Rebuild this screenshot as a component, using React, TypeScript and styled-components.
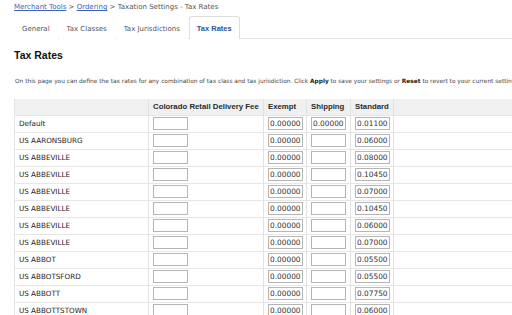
import React from "react";
import styled, { createGlobalStyle } from "styled-components";

const GlobalStyle = createGlobalStyle`
  html, body {
    margin: 0;
    padding: 0;
    background: #fff;
    overflow: hidden;
  }
  body {
    font-family: "DejaVu Sans", "Liberation Sans", sans-serif;
    color: #222;
  }
`;

const Page = styled.div`
  width: 700px;
  padding: 0 0 0 14px;
`;

const Crumbs = styled.div`
  height: 16px;
  padding-top: 2px;
  box-sizing: border-box;
  font-size: 7px;
  line-height: 11px;
  color: #555;
  white-space: nowrap;
  a {
    color: #3a63b8;
    text-decoration: underline;
  }
`;

const TabBar = styled.div`
  display: flex;
  gap: 1px;
  height: 22px;
  border-bottom: 1px solid #e2e2e2;
`;

const Tab = styled.div<{ $active?: boolean }>`
  display: flex;
  align-items: center;
  padding: 1px 7px 0;
  height: 23px;
  font-size: ${(p) => (p.$active ? "7.5px" : "7px")};
  font-family: ${(p) => (p.$active ? '"Liberation Sans", Arial, sans-serif' : "inherit")};
  font-weight: ${(p) => (p.$active ? 700 : 400)};
  color: ${(p) => (p.$active ? "#2b5797" : "#555")};
  background: #fff;
  border: 1px solid ${(p) => (p.$active ? "#dedede" : "transparent")};
  border-bottom: none;
  border-radius: 3px 3px 0 0;
  box-sizing: border-box;
  white-space: nowrap;
`;

const Heading = styled.h1`
  margin: 10px 0 0 0;
  height: 12px;
  font-family: "Liberation Sans", Arial, sans-serif;
  font-size: 10.5px;
  line-height: 12px;
  font-weight: 700;
  color: #111;
`;

const Intro = styled.p`
  margin: 16px 0 0 1px;
  height: 8px;
  font-size: 5.85px;
  line-height: 8px;
  color: #444;
  white-space: nowrap;
  b {
    font-weight: 700;
    color: #222;
  }
`;

const Table = styled.table`
  margin-top: 14px;
  width: 640px;
  border-collapse: collapse;
  table-layout: fixed;
  border-left: 1px solid #e4e4e4;
`;

const Th = styled.th<{ $w?: number }>`
  ${(p) => (p.$w ? `width: ${p.$w}px;` : "")}
  height: 16px;
  padding: 0 0 0 4px;
  text-align: left;
  background: #f0f0f0;
  font-family: "Liberation Sans", Arial, sans-serif;
  font-size: 7.8px;
  font-weight: 700;
  color: #2a2a2a;
  border-right: 1px solid #e2e2e2;
  box-sizing: border-box;
  white-space: nowrap;
  overflow: hidden;
`;

const Td = styled.td<{ $empty?: boolean }>`
  height: 17px;
  padding: 0 0 1px 4px;
  font-size: 7.2px;
  color: #222;
  border-top: 1px solid #e6e6e6;
  border-right: ${(p) => (p.$empty ? "none" : "1px solid #e2e2e2")};
  box-sizing: border-box;
  white-space: nowrap;
`;

const RateInput = styled.input`
  display: block;
  width: 35px;
  height: 13px;
  margin: 0;
  padding: 0 1px;
  box-sizing: border-box;
  border: 1px solid #b5b5b5;
  border-radius: 0;
  font-family: "DejaVu Sans", sans-serif;
  font-size: 7.4px;
  color: #333;
  background: #fff;
  outline: none;
`;

type Row = { name: string; exempt: string; shipping: string; standard: string };

const rows: Row[] = [
  { name: "Default", exempt: "0.00000", shipping: "0.00000", standard: "0.01100" },
  { name: "US AARONSBURG", exempt: "0.00000", shipping: "", standard: "0.06000" },
  { name: "US ABBEVILLE", exempt: "0.00000", shipping: "", standard: "0.08000" },
  { name: "US ABBEVILLE", exempt: "0.00000", shipping: "", standard: "0.10450" },
  { name: "US ABBEVILLE", exempt: "0.00000", shipping: "", standard: "0.07000" },
  { name: "US ABBEVILLE", exempt: "0.00000", shipping: "", standard: "0.10450" },
  { name: "US ABBEVILLE", exempt: "0.00000", shipping: "", standard: "0.06000" },
  { name: "US ABBEVILLE", exempt: "0.00000", shipping: "", standard: "0.07000" },
  { name: "US ABBOT", exempt: "0.00000", shipping: "", standard: "0.05500" },
  { name: "US ABBOTSFORD", exempt: "0.00000", shipping: "", standard: "0.05500" },
  { name: "US ABBOTT", exempt: "0.00000", shipping: "", standard: "0.07750" },
  { name: "US ABBOTTSTOWN", exempt: "0.00000", shipping: "", standard: "0.06000" },
];

const App = () => {
  return (
    <Page>
      <GlobalStyle />
      <Crumbs>
        <a>Merchant Tools</a> &gt; <a>Ordering</a> &gt; Taxation Settings - Tax Rates
      </Crumbs>
      <TabBar>
        <Tab>General</Tab>
        <Tab>Tax Classes</Tab>
        <Tab>Tax Jurisdictions</Tab>
        <Tab $active>Tax Rates</Tab>
      </TabBar>
      <Heading>Tax Rates</Heading>
      <Intro>
        On this page you can define the tax rates for any combination of tax class and tax
        jurisdiction. Click <b>Apply</b> to save your settings or <b>Reset</b> to revert to your
        current settings.
      </Intro>
      <Table>
        <thead>
          <tr>
            <Th $w={134} />
            <Th $w={115}>Colorado Retail Delivery Fee</Th>
            <Th $w={43}>Exempt</Th>
            <Th $w={44}>Shipping</Th>
            <Th $w={43}>Standard</Th>
            <Th />
          </tr>
        </thead>
        <tbody>
          {rows.map((r, i) => (
            <tr key={i}>
              <Td>{r.name}</Td>
              <Td>
                <RateInput defaultValue="" />
              </Td>
              <Td>
                <RateInput defaultValue={r.exempt} />
              </Td>
              <Td>
                <RateInput defaultValue={r.shipping} />
              </Td>
              <Td>
                <RateInput defaultValue={r.standard} />
              </Td>
              <Td $empty />
            </tr>
          ))}
        </tbody>
      </Table>
    </Page>
  );
};

export default App;
